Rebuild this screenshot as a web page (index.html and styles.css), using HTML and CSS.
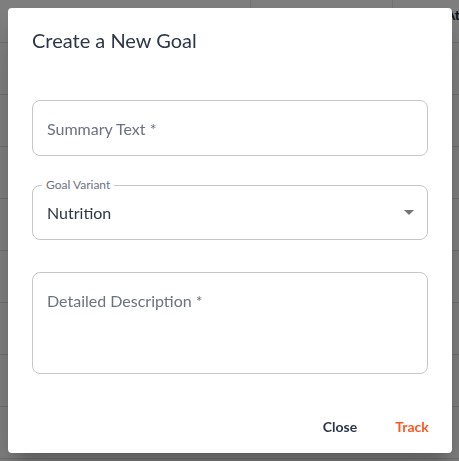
FILE: index.html
```html
<!DOCTYPE html>
<html lang="en">
<head>
    <meta charset="UTF-8">
    <meta name="viewport" content="width=device-width, initial-scale=1.0">
    <title>Goals</title>
    <link rel="stylesheet" href="styles.css">
</head>

<body>
    <!-- page behind the dialog -->
    <div class="grid-view">
        <div class="grid-head">
            <div class="cell c1">Summary</div>
            <div class="cell c2">Variant</div>
            <div class="cell c3">Created At</div>
        </div>
        <div class="grid-row"></div>
        <div class="grid-row"></div>
        <div class="grid-row"></div>
        <div class="grid-row"></div>
        <div class="grid-row"></div>
        <div class="grid-row"></div>
        <div class="grid-row"></div>
        <div class="grid-row"></div>
    </div>

    <div class="backdrop"></div>

    <div class="dialog">
        <h2 class="dialog-title">Create a New Goal</h2>

        <div class="dialog-content">
            <div class="field">
                <span class="placeholder">Summary Text *</span>
            </div>

            <div class="field select-field">
                <span class="float-label">Goal Variant</span>
                <span class="value">Nutrition</span>
                <svg class="arrow" viewBox="0 0 24 24" width="24" height="24">
                    <path d="M7 10l5 5 5-5z" fill="currentColor" />
                </svg>
            </div>

            <div class="field multi-field">
                <span class="placeholder">Detailed Description *</span>
            </div>
        </div>

        <div class="dialog-actions">
            <button class="btn">Close</button>
            <button class="btn primary">Track</button>
        </div>
    </div>
</body>
</html>
```

FILE: styles.css
```css
html, body {
    width: 100%;
    height: 100%;
    margin: 0;
    overflow: hidden;
}

body {
    background-color: #ffffff;
    font-family: Lato, "Open Sans", sans-serif;
    color: #2d3748;
}

/* background grid */
.grid-view {
    width: 100%;
}
.grid-head {
    display: flex;
    height: 42px;
    border-bottom: 1px solid #e0e0e0;
    font-size: 14px;
    font-weight: 700;
    color: #222222;
}
.grid-head > .cell {
    display: flex;
    align-items: flex-start;
    padding-top: 6px;
    box-sizing: border-box;
}
.grid-head > .c1 {
    width: 265px;
    padding-left: 16px;
}
.grid-head > .c2 {
    width: 150px;
    border-left: 1px solid #e8e8e8;
    padding-left: 16px;
}
.grid-head > .c3 {
    flex: 1;
    justify-content: flex-end;
    border-left: 1px solid #e8e8e8;
    margin-right: -1px;
    white-space: nowrap;
}
.grid-row {
    height: 51px;
    border-bottom: 1px solid #e0e0e0;
}

.backdrop {
    position: fixed;
    inset: 0;
    background-color: rgba(0, 0, 0, 0.5);
}

/* dialog */
.dialog {
    position: absolute;
    top: 8px;
    left: 8px;
    width: 444px;
    display: flex;
    flex-direction: column;
    background-color: #ffffff;
    border-radius: 4px;
    box-shadow: 0 11px 15px -7px rgba(0, 0, 0, 0.2), 0 24px 38px 3px rgba(0, 0, 0, 0.14);
}

.dialog-title {
    margin: 0;
    padding: 16px 24px;
    font-size: 20px;
    font-weight: 400;
    line-height: 32px;
    color: #2d3748;
}

.dialog-content {
    display: flex;
    flex-direction: column;
    padding: 28px 24px 27px;
}

.field {
    position: relative;
    display: flex;
    align-items: center;
    height: 56px;
    box-sizing: border-box;
    padding: 0 14px;
    border: 1px solid #c6c6c6;
    border-radius: 8px;
    font-size: 16px;
    line-height: 23px;
}
.field > .placeholder {
    color: #6b7280;
}

.select-field {
    height: 55px;
    margin-top: 29px;
}
.select-field > .float-label {
    position: absolute;
    top: -9px;
    left: 9px;
    padding: 0 4px;
    background-color: #ffffff;
    font-size: 12px;
    line-height: 16px;
    color: #6b7280;
}
.select-field > .value {
    color: #2d3748;
}
.select-field > .arrow {
    position: absolute;
    top: 14px;
    right: 6px;
    color: #757575;
}

.multi-field {
    align-items: flex-start;
    height: 102px;
    margin-top: 32px;
    padding-top: 16px;
}

.dialog-actions {
    display: flex;
    justify-content: flex-end;
    gap: 8px;
    padding: 8px;
}

.btn {
    min-width: 64px;
    padding: 6px 8px;
    border: none;
    border-radius: 4px;
    background: none;
    font-family: Lato, "Open Sans", sans-serif;
    font-size: 14px;
    font-weight: 700;
    line-height: 24px;
    color: #2d3748;
    cursor: pointer;
}
.btn.primary {
    color: #ff5722;
}
```
